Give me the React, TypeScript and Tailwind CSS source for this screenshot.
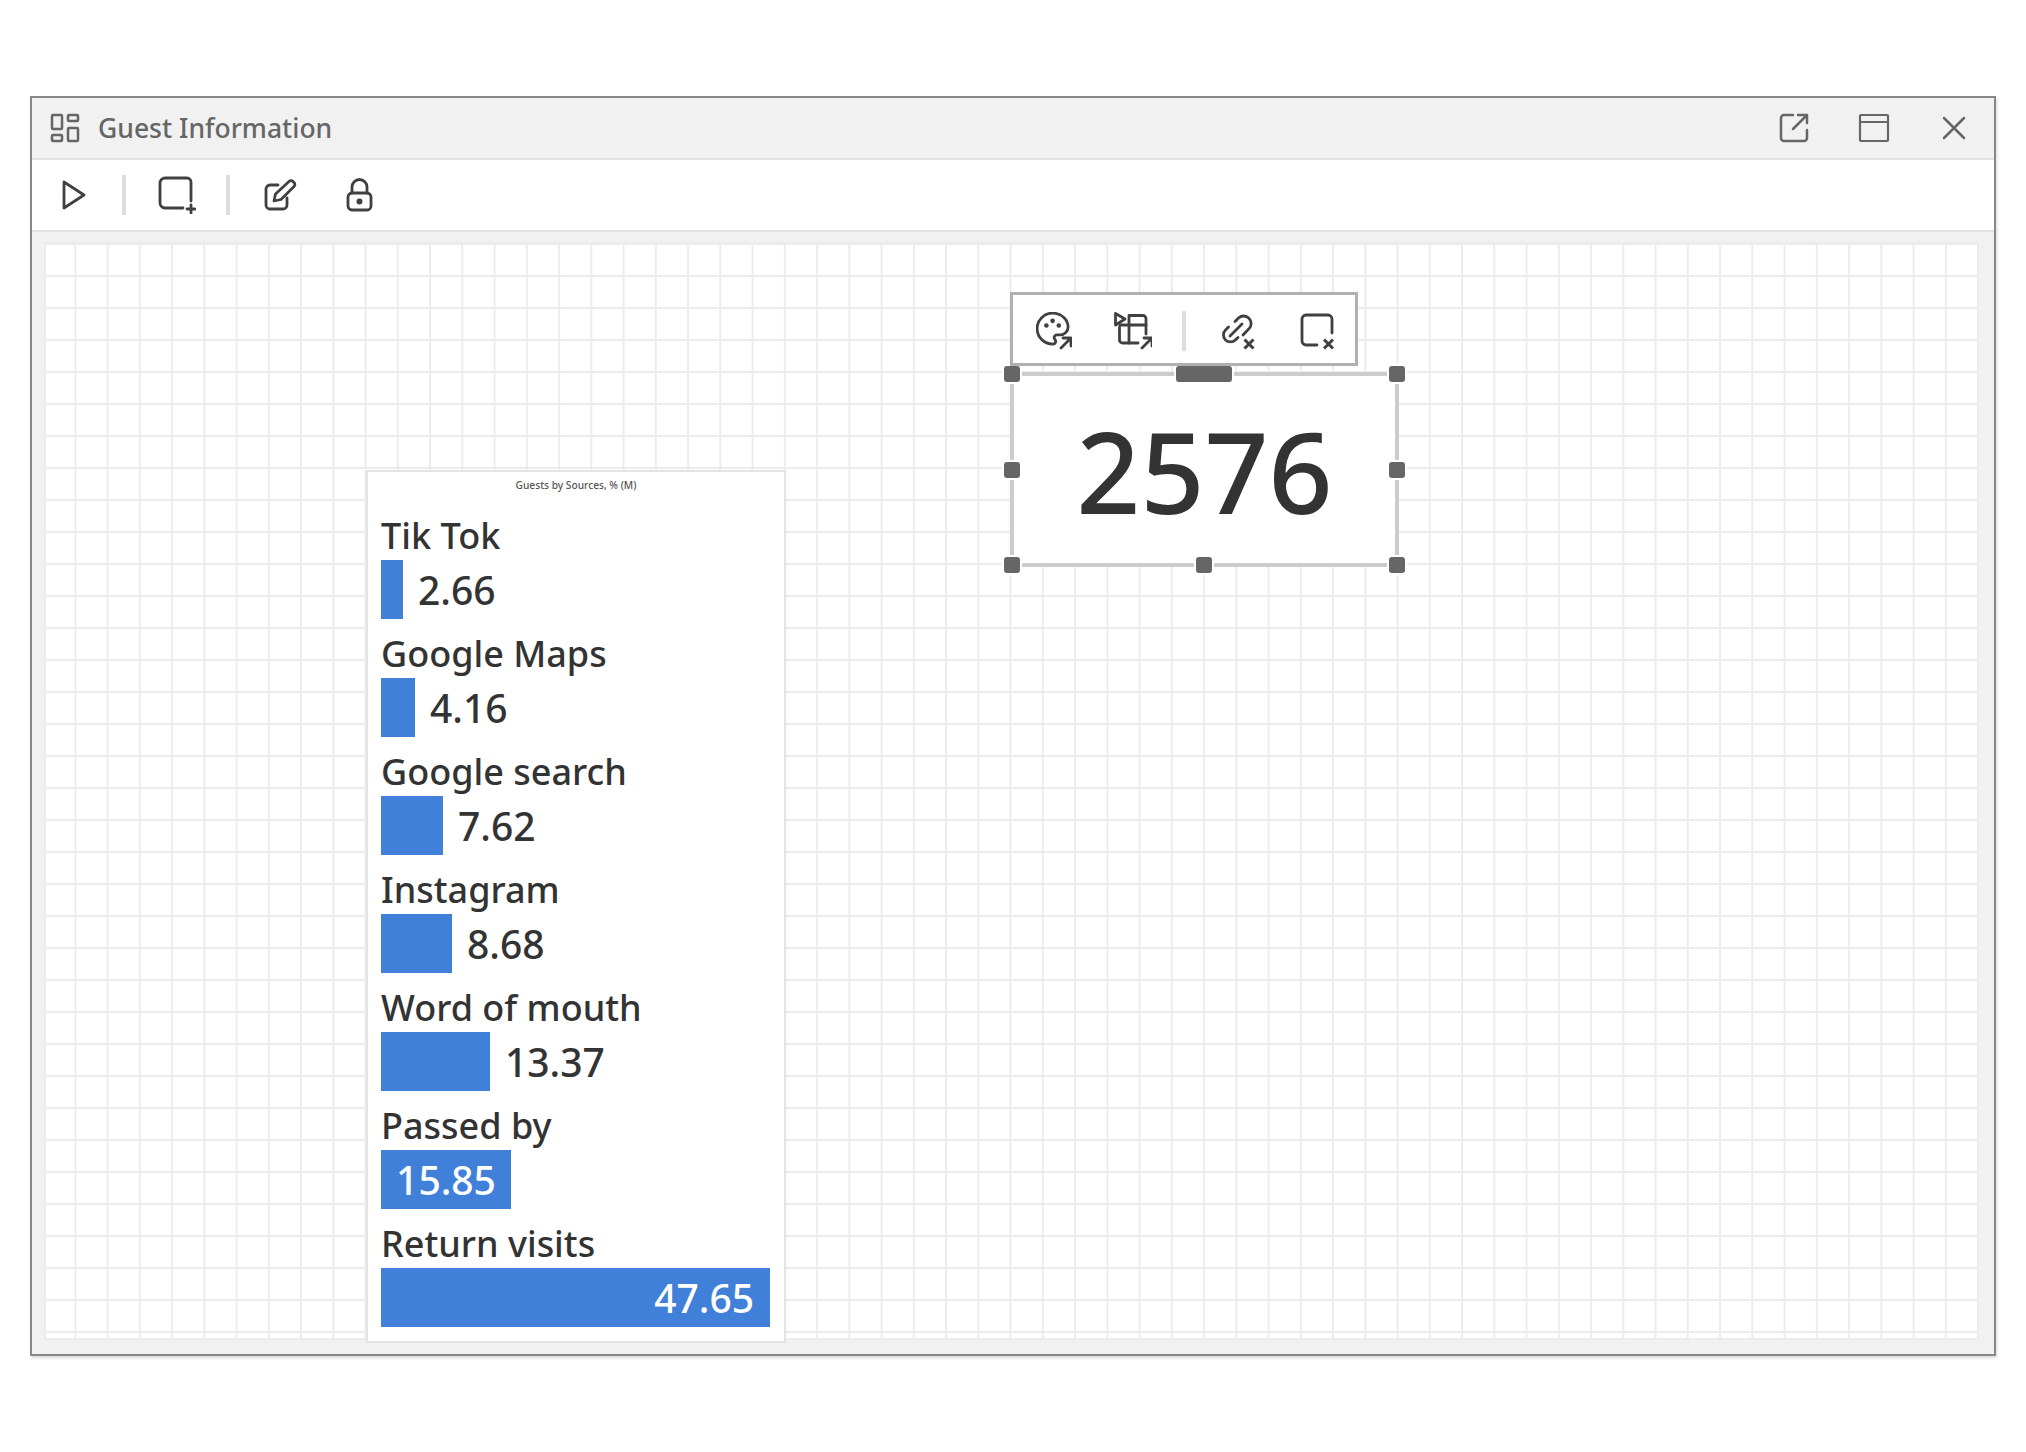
import React from 'react';

const FONT = "font-['Noto_Sans',sans-serif]";

const sources = [
  { label: 'Tik Tok', value: '2.66', width: 22 },
  { label: 'Google Maps', value: '4.16', width: 34 },
  { label: 'Google search', value: '7.62', width: 62 },
  { label: 'Instagram', value: '8.68', width: 71 },
  { label: 'Word of mouth', value: '13.37', width: 109 },
  { label: 'Passed by', value: '15.85', width: 130, inside: 'center' },
  { label: 'Return visits', value: '47.65', width: 389, inside: 'end' },
];

const Ico: React.FC<{ w: number; h: number; className?: string; color?: string; sw?: number; children: React.ReactNode }> = ({
  w,
  h,
  className,
  color = '#404040',
  sw = 2.8,
  children,
}) => (
  <svg
    width={w}
    height={h}
    viewBox={`0 0 ${w} ${h}`}
    fill="none"
    stroke={color}
    strokeWidth={sw}
    strokeLinecap="round"
    strokeLinejoin="round"
    className={`block shrink-0 ${className ?? ''}`}
  >
    {children}
  </svg>
);

const Separator = ({ className }: { className: string }) => <div className={`w-1 h-10 bg-[#dcdcdc] shrink-0 ${className}`} />;

const CornerArrow = ({ x, y }: { x: number; y: number }) => (
  <g transform={`translate(${x} ${y})`}>
    <path d="M0 10 L10 0 M2 0 H10 V8" />
  </g>
);

const CornerX = ({ x, y }: { x: number; y: number }) => (
  <path d={`M${x - 4.5} ${y - 4.5} l9 9 m0 -9 l-9 9`} strokeWidth={3} strokeLinecap="butt" />
);

const Handle = ({ className }: { className: string }) => (
  <div className={`absolute w-4 h-4 bg-[#666] rounded-[3px] ring-2 ring-white ${className}`} />
);

const SourceRow = ({ item }: { item: (typeof sources)[number] }) => (
  <div className="flex flex-col">
    <div className="h-[59px] flex items-end text-[36px] leading-[48px] font-medium text-[#333] whitespace-nowrap">{item.label}</div>
    <div className="h-[59px] flex items-center">
      <div
        className={`h-full bg-[#4080d8] flex items-center text-white text-[39px] font-medium pt-[1px] ${
          item.inside === 'center' ? 'justify-center' : 'justify-end pr-4'
        }`}
        style={{ width: item.width }}
      >
        {item.inside ? item.value : null}
      </div>
      {!item.inside && <span className="ml-[15px] pt-[1px] text-[39px] font-medium text-[#333]">{item.value}</span>}
    </div>
  </div>
);

const App: React.FC = () => {
  return (
    <div className={`w-[2026px] h-[1452px] bg-white pt-[96px] pl-[30px] ${FONT}`}>
      <div className="w-[1966px] h-[1260px] border-2 border-[#888] flex flex-col shadow-[1px_2px_3px_rgba(0,0,0,0.15)]">
        {/* title bar */}
        <div className="h-[62px] shrink-0 bg-[#f1f1f1] border-b-2 border-[#e2e2e2] flex items-center relative">
          <Ico w={30} h={30} color="#666" sw={2.5} className="ml-[18px]">
            <rect x="2" y="2" width="10" height="14" rx="1" />
            <rect x="18" y="2" width="10" height="6" rx="1" />
            <rect x="2" y="22" width="10" height="6" rx="1" />
            <rect x="18" y="15" width="10" height="13" rx="1" />
          </Ico>
          <span className="ml-[18px] pt-[2px] text-[26.5px] text-[#666] font-medium">Guest Information</span>
          <div className="ml-auto flex items-center pr-[28px]">
            <Ico w={30} h={30} color="#666" sw={2.5}>
              <path d="M14 2 H5 a3 3 0 0 0 -3 3 V25 a3 3 0 0 0 3 3 H25 a3 3 0 0 0 3 -3 V17" />
              <path d="M14 16 L28 2 M19 2 H28 V10" />
            </Ico>
            <Ico w={32} h={30} color="#666" sw={2.2} className="ml-[49px]">
              <rect x="2" y="2" width="28" height="26" rx="1" />
              <path d="M2 9 H30" />
            </Ico>
            <Ico w={24} h={24} color="#666" sw={2.5} className="ml-[52px]">
              <path d="M2 2 L22 22 M22 2 L2 22" />
            </Ico>
          </div>
        </div>

        {/* toolbar */}
        <div className="h-[72px] shrink-0 bg-white border-b-2 border-[#e2e2e2] flex items-center pl-[30px]">
          <Ico w={24} h={30}>
            <path d="M2 2 L22 15 L2 28 Z" />
          </Ico>
          <Separator className="ml-[36px]" />
          <Ico w={38} h={38} className="ml-[32px]">
            <path d="M25 32 H7 a5 5 0 0 1 -5 -5 V7 a5 5 0 0 1 5 -5 H29 a4 4 0 0 1 4 4 V25" />
            <path d="M33 29 v8 M29 33 h8" />
          </Ico>
          <Separator className="ml-[30px]" />
          <Ico w={33} h={32} className="ml-[34px]">
            <path d="M14 6 H6 a4 4 0 0 0 -4 4 V26 a4 4 0 0 0 4 4 H19 a4 4 0 0 0 4 -4 V19" />
            <path d="M10 22 l1.5 -7 L25 2.5 a2.8 2.8 0 0 1 4 0 l1 1 a2.8 2.8 0 0 1 0 4 L17 20.5 Z" />
          </Ico>
          <Ico w={27} h={34} className="ml-[49px]">
            <rect x="2" y="15" width="23" height="17" rx="4" />
            <path d="M6 15 V9 a7.5 7.5 0 0 1 15 0 V15" />
            <circle cx="13.5" cy="23.5" r="1.6" fill="#404040" />
          </Ico>
        </div>

        {/* canvas */}
        <div className="flex-1 min-h-0 bg-[#f1f1f1] pt-[10px] pl-[12px] pr-[15px] pb-[14px]">
          <div className="relative w-full h-full border-2 border-[#ececec] bg-white bg-[linear-gradient(to_right,transparent_28.7px,#ececec_28.7px,#ececec_30.7px,transparent_30.7px),linear-gradient(to_bottom,#ececec_1px,transparent_1px,transparent_31px,#ececec_31px)] bg-[size:32.25px_32px]">
            {/* chart widget */}
            <div className="absolute left-[320px] top-[226px] w-[420px] h-[873px] bg-white border-2 border-[#e4e4e4] pl-[13px] pr-[13px] flex flex-col">
              <div className="h-[29px] flex items-center justify-center pb-[2px] text-[10.2px] font-medium text-[#555]">Guests by Sources, % (M)</div>
              {sources.map((s) => (
                <SourceRow key={s.label} item={s} />
              ))}
            </div>

            {/* selected number widget */}
            <div className="absolute left-[964px] top-[128px] w-[389px] h-[195px] bg-white border-4 border-[#ccc] flex items-center justify-center">
              <span className="text-[112px] leading-none font-medium text-[#333] pt-[2px]">2576</span>
              <Handle className="-left-[10px] -top-[10px]" />
              <Handle className="-right-[10px] -top-[10px]" />
              <Handle className="-left-[10px] top-1/2 -translate-y-1/2" />
              <Handle className="-right-[10px] top-1/2 -translate-y-1/2" />
              <Handle className="-left-[10px] -bottom-[10px]" />
              <Handle className="-right-[10px] -bottom-[10px]" />
              <Handle className="left-[182px] -bottom-[10px]" />
              <div className="absolute left-[162px] -top-[10px] w-14 h-4 bg-[#666] rounded-[3px] ring-2 ring-white" />
            </div>

            {/* widget toolbar */}
            <div className="absolute left-[964px] top-[48px] w-[348px] h-[74px] bg-white border-[3px] border-[#b0b0b0] flex items-center pl-[23px] pt-[4px]">
              <Ico w={36} h={38}>
                <g transform="translate(-2 -2) scale(1.55)" strokeWidth={1.8}>
                  <path d="M12 22a1 1 0 0 1 0-20 10 9 0 0 1 10 9 5 5 0 0 1-5 5h-2.25a1.75 1.75 0 0 0-1.4 2.8l.3.4a1.75 1.75 0 0 1-1.4 2.8z" />
                  <circle cx="8" cy="10" r="0.6" fill="#404040" />
                  <circle cx="12" cy="7" r="0.6" fill="#404040" />
                  <circle cx="16" cy="10" r="0.6" fill="#404040" />
                </g>
                <CornerArrow x={25} y={26} />
              </Ico>
              <Ico w={38} h={38} className="ml-[42px]">
                <path d="M16 3.5 H29 a3 3 0 0 1 3 3 V22" />
                <path d="M5.5 15 V28 a3 3 0 0 0 3 3 H24" />
                <path d="M6 13 H32 M15 3.5 V31" />
                <path d="M1.5 1.5 L11 7 L1.5 13 Z" fill="#fff" />
                <CornerArrow x={28} y={26} />
              </Ico>
              <Separator className="ml-[30px]" />
              <Ico w={36} h={37} className="ml-[36px]">
                <path d="M13 8.5 l3.5 -3.5 a7.5 7.5 0 0 1 10.6 10.6 L21 22" />
                <path d="M6.5 14 L3.5 17 a7 7 0 0 0 9.9 9.9 L16 24.5" />
                <path d="M8 23 L20 11" />
                <CornerX x={27} y={31} />
              </Ico>
              <Ico w={36} h={37} className="ml-[42px]">
                <path d="M17 32 H6 a4 4 0 0 1 -4 -4 V6 a4 4 0 0 1 4 -4 H28 a4 4 0 0 1 4 4 V20" />
                <CornerX x={28.5} y={31} />
              </Ico>
            </div>
          </div>
        </div>
      </div>
    </div>
  );
};

export default App;
